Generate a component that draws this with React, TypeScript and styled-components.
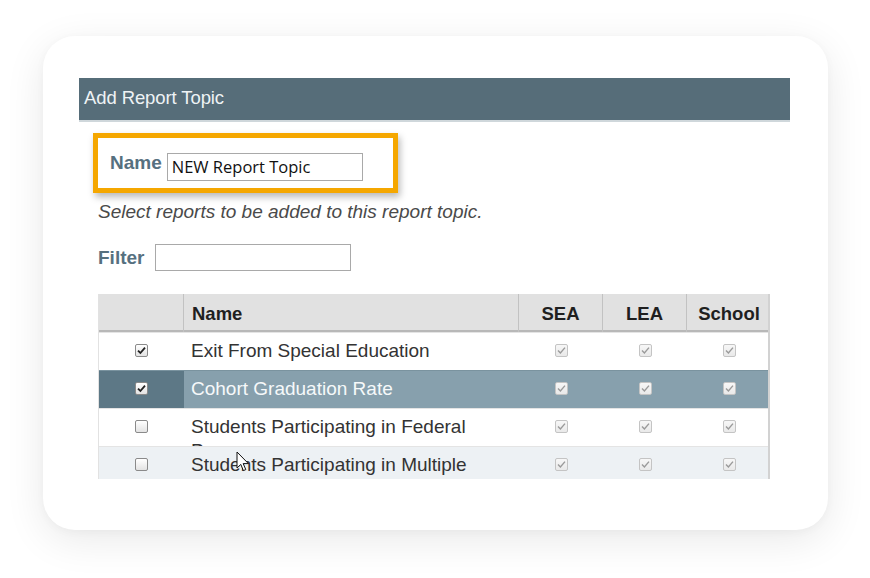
import React from "react";
import styled, { createGlobalStyle } from "styled-components";

const Global = createGlobalStyle`
  html, body { margin: 0; padding: 0; background: #ffffff; }
  body { font-family: "Liberation Sans", Arial, sans-serif; }
  * { box-sizing: border-box; }
`;

const Page = styled.div`
  width: 870px;
  height: 578px;
  padding: 36px 0 0 43px;
  background: #ffffff;
`;

const Card = styled.div`
  width: 785px;
  height: 494px;
  border-radius: 32px;
  background: #ffffff;
  box-shadow: 0 10px 40px rgba(0, 0, 0, 0.09), 0 2px 10px rgba(0, 0, 0, 0.03);
  padding: 42px 0 0 36px;
`;

const Panel = styled.div`
  width: 711px;
`;

const TitleBar = styled.div`
  height: 44px;
  background: #566d79;
  border-bottom: 2px solid #cfd7db;
  color: #eef3f5;
  font-size: 18.5px;
  line-height: 40px;
  padding-left: 5px;
  letter-spacing: -0.1px;
`;

const Body = styled.div`
  padding: 11px 0 0 14px;
`;

const Highlight = styled.div`
  width: 305px;
  height: 60px;
  border: 5px solid #f5a700;
  box-shadow: 2px 4px 7px rgba(0, 0, 0, 0.28);
  display: flex;
  align-items: center;
  gap: 5px;
  padding-left: 12px;
`;

const FieldLabel = styled.span`
  font-weight: bold;
  font-size: 19px;
  color: #56707f;
`;

const TextBox = styled.div<{ $w: number; $h: number; $shift?: number }>`
  width: ${(p) => p.$w}px;
  height: ${(p) => p.$h}px;
  border: 1px solid #a9a9a9;
  background: #fff;
  margin-top: ${(p) => p.$shift ?? 0}px;
  font-family: "Open Sans", "Noto Sans", sans-serif;
  font-size: 16.5px;
  color: #111;
  line-height: 26px;
  padding-left: 4px;
`;

const Hint = styled.div`
  margin: 9px 0 0 5px;
  font-style: italic;
  font-size: 19px;
  line-height: 20px;
  color: #4a4a4a;
`;

const FilterRow = styled.div`
  margin: 22px 0 0 5px;
  display: flex;
  align-items: center;
  gap: 11px;
`;

const TableWrap = styled.div`
  position: relative;
  margin: 23px 0 0 5px;
  width: 672px;
  height: 185px;
  overflow: hidden;
  border-left: 1px solid #e2e2e2;
  border-right: 2px solid #d2d2d2;
`;

const COLS = "85px 335px 84px 84px 84px";

const HeadRow = styled.div`
  display: grid;
  grid-template-columns: ${COLS};
  height: 38px;
  background: #e1e1e1;
  border-bottom: 2px solid #b8b8b8;
`;

const HeadCell = styled.div<{ $left?: boolean }>`
  font-weight: bold;
  font-size: 18.5px;
  color: #1f1f1f;
  line-height: 36px;
  padding-top: 2px;
  border-right: 1px solid #c2c2c2;
  text-align: ${(p) => (p.$left ? "left" : "center")};
  padding-left: ${(p) => (p.$left ? "8px" : "0")};
  &:last-child { border-right: none; }
`;

const Row = styled.div<{ $tone: "white" | "alt" | "sel" }>`
  display: grid;
  grid-template-columns: ${COLS};
  height: 38px;
  overflow: hidden;
  border-top: 1px solid ${(p) => (p.$tone === "sel" ? "#7a939f" : "#e4e4e4")};
  background: ${(p) =>
    p.$tone === "sel" ? "#87a0ad" : p.$tone === "alt" ? "#edf1f4" : "#ffffff"};
  color: ${(p) => (p.$tone === "sel" ? "#f6f9fa" : "#333333")};
`;

const BoxCell = styled.div<{ $dark?: boolean }>`
  display: flex;
  align-items: center;
  justify-content: center;
  background: ${(p) => (p.$dark ? "#5d7886" : "transparent")};
  padding-bottom: 2px;
`;

const NameCell = styled.div`
  font-size: 19px;
  line-height: 24px;
  padding: 6px 8px 0 7px;
  overflow: hidden;
`;

const Check = styled.span<{ $off?: boolean }>`
  width: 13px;
  height: 13px;
  border-radius: 2px;
  border: 1px solid ${(p) => (p.$off ? "#c4c4c4" : "#8a8a8a")};
  background: ${(p) =>
    p.$off ? "linear-gradient(#f7f7f7, #e9e9e9)" : "linear-gradient(#ffffff, #e3e3e3)"};
  display: flex;
  align-items: center;
  justify-content: center;
`;

const Cursor = styled.svg`
  position: absolute;
  left: 137px;
  top: 157px;
`;

const CheckBox = ({ checked, off }: { checked: boolean; off?: boolean }) => (
  <Check $off={off}>
    {checked && (
      <svg width="9" height="9" viewBox="0 0 9 9">
        <path
          d="M1 4.6 L3.4 7 L8 1.6"
          fill="none"
          stroke={off ? "#9a9a9a" : "#222"}
          strokeWidth={off ? 1.4 : 1.8}
        />
      </svg>
    )}
  </Check>
);

type R = { name: string; checked: boolean; tone: "white" | "alt" | "sel" };
const rows: R[] = [
  { name: "Exit From Special Education", checked: true, tone: "white" },
  { name: "Cohort Graduation Rate", checked: true, tone: "sel" },
  { name: "Students Participating in Federal Programs", checked: false, tone: "white" },
  { name: "Students Participating in Multiple Programs", checked: false, tone: "alt" },
];

export default function App() {
  return (
    <>
      <Global />
      <Page>
        <Card>
          <Panel>
            <TitleBar>Add Report Topic</TitleBar>
            <Body>
              <Highlight>
                <FieldLabel>Name</FieldLabel>
                <TextBox $w={196} $h={28} $shift={7}>NEW Report Topic</TextBox>
              </Highlight>
              <Hint>Select reports to be added to this report topic.</Hint>
              <FilterRow>
                <FieldLabel>Filter</FieldLabel>
                <TextBox $w={196} $h={27} />
              </FilterRow>
              <TableWrap>
                <HeadRow>
                  <HeadCell />
                  <HeadCell $left>Name</HeadCell>
                  <HeadCell>SEA</HeadCell>
                  <HeadCell>LEA</HeadCell>
                  <HeadCell>School</HeadCell>
                </HeadRow>
                {rows.map((r) => (
                  <Row key={r.name} $tone={r.tone}>
                    <BoxCell $dark={r.tone === "sel"}>
                      <CheckBox checked={r.checked} />
                    </BoxCell>
                    <NameCell>{r.name}</NameCell>
                    <BoxCell><CheckBox checked off /></BoxCell>
                    <BoxCell><CheckBox checked off /></BoxCell>
                    <BoxCell><CheckBox checked off /></BoxCell>
                  </Row>
                ))}
                <Cursor width="14" height="22" viewBox="0 0 14 22">
                  <path
                    d="M1 1 L1 17 L4.8 13.4 L7.4 19.6 L9.8 18.6 L7.2 12.6 L12.4 12.6 Z"
                    fill="#ffffff"
                    stroke="#111"
                    strokeWidth="1"
                    strokeLinejoin="round"
                  />
                </Cursor>
              </TableWrap>
            </Body>
          </Panel>
        </Card>
      </Page>
    </>
  );
}
